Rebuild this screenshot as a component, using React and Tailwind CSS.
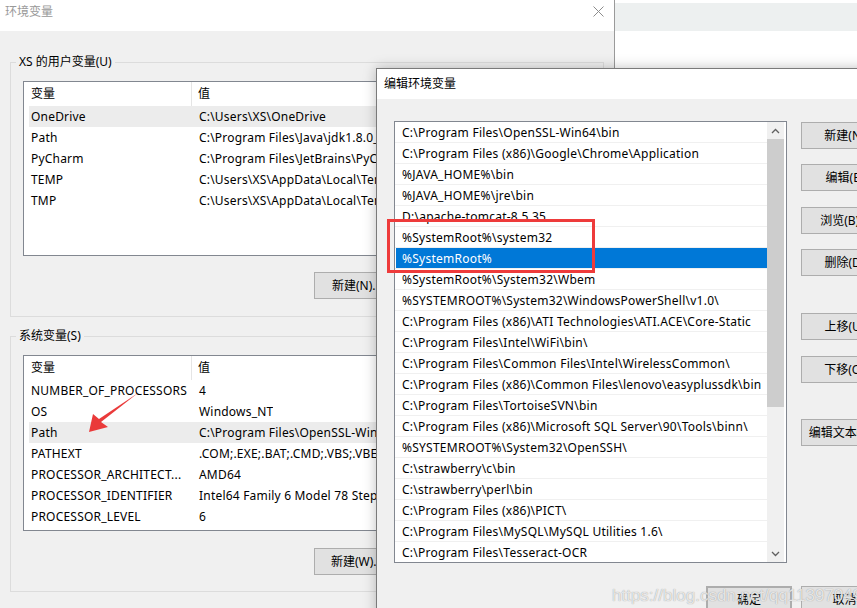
const userVars = [
  ['OneDrive', 'C:\\Users\\XS\\OneDrive'],
  ['Path', 'C:\\Program Files\\Java\\jdk1.8.0_191\\bin;C:\\Program Files\\Java\\jdk1.8.0_191\\jre\\bin'],
  ['PyCharm', 'C:\\Program Files\\JetBrains\\PyCharm 2018.3.2\\bin;'],
  ['TEMP', 'C:\\Users\\XS\\AppData\\Local\\Temp'],
  ['TMP', 'C:\\Users\\XS\\AppData\\Local\\Temp'],
]

const sysVars = [
  ['NUMBER_OF_PROCESSORS', '4'],
  ['OS', 'Windows_NT'],
  ['Path', 'C:\\Program Files\\OpenSSL-Win64\\bin;C:\\Program Files (x86)\\Google\\Chrome'],
  ['PATHEXT', '.COM;.EXE;.BAT;.CMD;.VBS;.VBE;.JS;.JSE;.WSF;.WSH;.MSC'],
  ['PROCESSOR_ARCHITECT...', 'AMD64'],
  ['PROCESSOR_IDENTIFIER', 'Intel64 Family 6 Model 78 Stepping 3, GenuineIntel'],
  ['PROCESSOR_LEVEL', '6'],
]

const paths = [
  'C:\\Program Files\\OpenSSL-Win64\\bin',
  'C:\\Program Files (x86)\\Google\\Chrome\\Application',
  '%JAVA_HOME%\\bin',
  '%JAVA_HOME%\\jre\\bin',
  'D:\\apache-tomcat-8.5.35',
  '%SystemRoot%\\system32',
  '%SystemRoot%',
  '%SystemRoot%\\System32\\Wbem',
  '%SYSTEMROOT%\\System32\\WindowsPowerShell\\v1.0\\',
  'C:\\Program Files (x86)\\ATI Technologies\\ATI.ACE\\Core-Static',
  'C:\\Program Files\\Intel\\WiFi\\bin\\',
  'C:\\Program Files\\Common Files\\Intel\\WirelessCommon\\',
  'C:\\Program Files (x86)\\Common Files\\lenovo\\easyplussdk\\bin',
  'C:\\Program Files\\TortoiseSVN\\bin',
  'C:\\Program Files (x86)\\Microsoft SQL Server\\90\\Tools\\binn\\',
  '%SYSTEMROOT%\\System32\\OpenSSH\\',
  'C:\\strawberry\\c\\bin',
  'C:\\strawberry\\perl\\bin',
  'C:\\Program Files (x86)\\PICT\\',
  'C:\\Program Files\\MySQL\\MySQL Utilities 1.6\\',
  'C:\\Program Files\\Tesseract-OCR',
  'C:\\Program Files\\nodejs\\',
]

function WinButton({ children, className = '' }) {
  return (
    <div className={`h-[27px] shrink-0 flex items-center justify-center whitespace-nowrap overflow-hidden bg-[#e1e1e1] border border-[#adadad] text-[12px] text-black ${className}`}>
      {children}
    </div>
  )
}

function VarList({ rows, highlight, height }) {
  return (
    <div className={`ml-[12px] w-[567px] ${height} border border-[#828790] bg-white overflow-hidden`}>
      <div className="h-[24px] flex items-center text-[12px]">
        <div className="w-[168px] shrink-0 h-full flex items-center pl-[7px] border-r border-[#e5e5e5]">变量</div>
        <div className="pl-[6px]">值</div>
      </div>
      <div className="px-[5px]">
        {rows.map(([k, v]) => (
          <div key={k} className={`h-[21px] flex items-center text-[12px] tracking-[0.2px] whitespace-nowrap ${k === highlight ? 'bg-[#ececec]' : ''}`}>
            <div className="w-[168px] shrink-0 pl-[2px] overflow-hidden">{k}</div>
            <div className="pl-[2px] min-w-0 overflow-hidden">{v}</div>
          </div>
        ))}
      </div>
    </div>
  )
}

function GroupBox({ label, children, className = '' }) {
  return (
    <fieldset className={`border border-[#dcdcdc] ${className}`}>
      <legend className="ml-[5px] px-[3px] text-[12px] leading-[16px]">{label}</legend>
      {children}
    </fieldset>
  )
}

export default function App() {
  return (
    <div className="relative w-[857px] h-[608px] overflow-hidden bg-white text-black font-['Noto_Sans','Noto_Sans_CJK_SC',sans-serif]">
      {/* window behind, top right */}
      <div className="absolute left-[615px] top-[3px] w-[260px] h-[28px] bg-[#edf0f0]" />

      {/* 环境变量 */}
      <div className="absolute left-0 top-0 w-[615px] h-[640px] border-r border-[#9a9a9a] bg-[#f0f0f0]">
        <div className="h-[31px] bg-white flex items-start justify-between pl-[5px] pr-[10px] pt-[3px]">
          <span className="text-[12px] leading-[17px] text-[#999999]">环境变量</span>
          <svg width="11" height="11" viewBox="0 0 11 11" className="mt-[3px]">
            <path d="M0.5 0.5L10.5 10.5M10.5 0.5L0.5 10.5" stroke="#8c8c8c" strokeWidth="1" />
          </svg>
        </div>
        <div className="px-[10px] pt-[23px]">
          <GroupBox label="XS 的用户变量(U)" className="pb-[17px]">
            <div className="mt-[11px]">
              <VarList rows={userVars} highlight="OneDrive" height="h-[175px]" />
            </div>
            <div className="mt-[16px] flex gap-[10px] pl-[303px]">
              <WinButton className="w-[86px]">新建(N)...</WinButton>
              <WinButton className="w-[86px]">编辑(E)...</WinButton>
              <WinButton className="w-[86px]">删除(D)</WinButton>
            </div>
          </GroupBox>
          <GroupBox label="系统变量(S)" className="mt-[11px] pb-[16px]">
            <div className="mt-[11px]">
              <VarList rows={sysVars} highlight="Path" height="h-[176px]" />
            </div>
            <div className="mt-[17px] flex gap-[10px] pl-[303px]">
              <WinButton className="w-[86px]">新建(W)...</WinButton>
              <WinButton className="w-[86px]">编辑(I)...</WinButton>
              <WinButton className="w-[86px]">删除(L)</WinButton>
            </div>
          </GroupBox>
        </div>
      </div>

      {/* red arrow */}
      <svg className="absolute left-0 top-0 pointer-events-none" width="857" height="608">
        <polygon points="89,432 93,414 99,419 138,393 101,422 108,427" fill="#ea3a3a" />
      </svg>

      {/* 编辑环境变量 */}
      <div className="absolute left-[376px] top-[68px] w-[560px] h-[580px] border border-[#7a7a7a] bg-[#f0f0f0] shadow-[0_0_12px_rgba(0,0,0,0.25)]">
        <div className="h-[30px] bg-white flex items-center pl-[7px] text-[12px]">编辑环境变量</div>
        <div className="pl-[17px] pt-[22px]">
          <div className="flex">
            <div className="w-[393px] h-[442px] border border-[#828790] bg-white flex overflow-hidden">
              <div className="w-[372px] overflow-hidden">
                {paths.map((p, i) => (
                  <div
                    key={p}
                    className={`h-[21px] border-b border-[#f0f0f0] ${i === 6 ? 'pl-[1px]' : ''}`}
                  >
                    <div className={`h-[20px] flex items-center whitespace-nowrap text-[12px] tracking-[0.25px] pt-[1px] ${i === 6 ? 'bg-[#0078d7] text-white pl-[6px]' : 'pl-[7px]'}`}>
                      {p}
                    </div>
                  </div>
                ))}
              </div>
              <div className="w-[17px] h-full bg-[#f0f0f0] flex flex-col">
                <div className="h-[17px] flex items-center justify-center">
                  <svg width="9" height="6" viewBox="0 0 9 6"><path d="M1 5L4.5 1.5L8 5" fill="none" stroke="#606060" strokeWidth="1.3" /></svg>
                </div>
                <div className="h-[268px] bg-[#cdcdcd]" />
                <div className="flex-1" />
                <div className="h-[17px] flex items-center justify-center">
                  <svg width="9" height="6" viewBox="0 0 9 6"><path d="M1 1L4.5 4.5L8 1" fill="none" stroke="#606060" strokeWidth="1.3" /></svg>
                </div>
              </div>
            </div>
            <div className="ml-[14px] flex flex-col pt-[1px]">
              <WinButton className="w-[87px]">新建(N)</WinButton>
              <WinButton className="w-[87px] mt-[15px]">编辑(E)</WinButton>
              <WinButton className="w-[87px] mt-[16px]">浏览(B)...</WinButton>
              <WinButton className="w-[87px] mt-[15px]">删除(D)</WinButton>
              <WinButton className="w-[87px] mt-[37px]">上移(U)</WinButton>
              <WinButton className="w-[87px] mt-[16px]">下移(O)</WinButton>
              <WinButton className="w-[87px] mt-[36px]">编辑文本(T)...</WinButton>
            </div>
          </div>
          <div className="mt-[23px] w-[494px] flex justify-end gap-[9px]">
            <WinButton className="w-[86px] border-2 border-[#0078d7]">确定</WinButton>
            <WinButton className="w-[87px]">取消</WinButton>
          </div>
        </div>
      </div>

      {/* red highlight box */}
      <div className="absolute left-[387px] top-[219px] w-[208px] h-[54px] border-[3px] border-[#ee3b3b] pointer-events-none" />

      {/* watermark */}
      <div className="absolute left-[612px] top-[585px] text-[17px] leading-[22px] font-['Liberation_Sans',sans-serif] text-[#ffffffc0] [text-shadow:0_0_1px_#8a8a8a] whitespace-nowrap">
        https://blog.csdn.net/qq113970496
      </div>
    </div>
  )
}
